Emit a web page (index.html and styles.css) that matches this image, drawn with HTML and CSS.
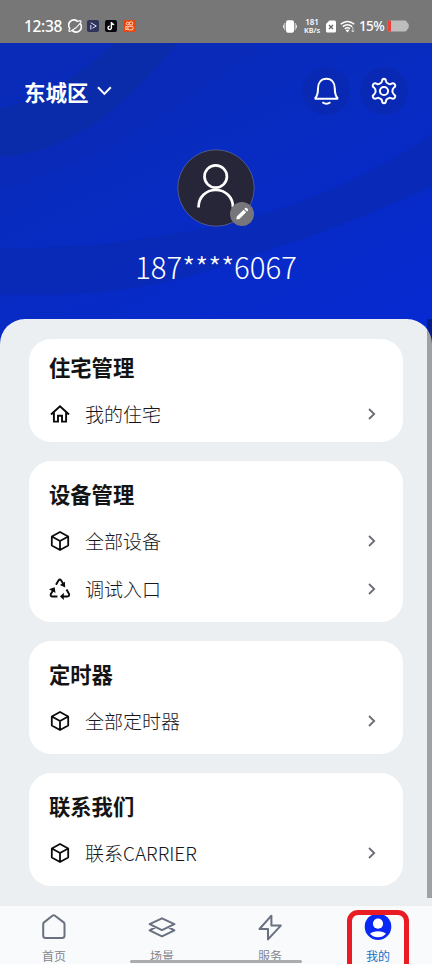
FILE: index.html
```html
<!DOCTYPE html>
<html lang="zh-CN">
<head>
<meta charset="utf-8">
<title>我的</title>
<link rel="stylesheet" href="styles.css">
</head>
<body>
<svg class="defs" width="0" height="0">
  <symbol id="cube" viewBox="0 0 20 20"><path d="M10 1 18.2 5.5V14.5L10 19 1.8 14.5V5.5ZM1.8 5.5 10 10 18.2 5.5M10 10V19" fill="none" stroke="#0b0b0d" stroke-width="1.8" stroke-linejoin="round"/></symbol>
  <symbol id="next" viewBox="0 0 10 14"><path d="M2 2 7.2 7 2 12" fill="none" stroke="#6b6c74" stroke-width="1.8"/></symbol>
</svg>
<div class="screen">
  <div class="status">
    <div class="status-left">
      <span class="clock">12:38</span>
      <svg class="planet" width="14" height="14" viewBox="0 0 14 14"><path d="M2 9.8A5 5 0 0 1 9.8 2.6M12 4.2A5 5 0 0 1 4.2 11.4" fill="none" stroke="#fff" stroke-width="1.6"/><path d="M9.8 2.6C13 .6 14 2 12 4.5 9.8 7.7 6 10.5 3 12 .6 13 .2 11.8 2 9.4" fill="none" stroke="#fff" stroke-width="1.1"/></svg>
      <svg width="12" height="12" viewBox="0 0 12 12"><rect width="12" height="12" rx="2" fill="#30345b"/><path d="M3.8 2.8 9.3 6 5.5 8.2M3.8 5V9.5" fill="none" stroke="#e0e3ff" stroke-width="1"/></svg>
      <svg width="12" height="12" viewBox="0 0 12 12"><rect width="12" height="12" rx="2" fill="#07070d"/><path d="M6.4 2V7.8A1.7 1.7 0 1 1 4.8 6.1M6.4 2.2C6.7 3.8 7.7 4.5 9.2 4.6" fill="none" stroke="#fff" stroke-width="1.4"/></svg>
      <svg width="13" height="12" viewBox="0 0 13 12"><rect width="13" height="12" rx="2" fill="#e8480e"/><g fill="none" stroke="#ffe8dc" stroke-width=".9"><circle cx="4.7" cy="3.6" r="1.4"/><circle cx="8.1" cy="3.4" r="1.7"/><rect x="5" y="6.3" width="5" height="3.6" rx="1"/><path d="M5 7.3 2.8 6.4V9.8L5 8.8"/></g></svg>
    </div>
    <div class="status-right">
      <svg class="vibrate" width="14" height="13" viewBox="0 0 14 13"><rect x="3" y=".2" width="8" height="12.6" rx="2" fill="#fff"/><path d="M1.8 3V10M12.2 3V10M.5 4.8V8.2M13.5 4.8V8.2" stroke="#ddd" stroke-width="1"/></svg>
      <span class="speed"><span>181</span><span>KB/s</span></span>
      <svg class="sim" width="10" height="13" viewBox="0 0 10 13"><path d="M3.4.5H8.5A1.5 1.5 0 0 1 10 2V11A1.5 1.5 0 0 1 8.5 12.5H1.5A1.5 1.5 0 0 1 0 11V4Z" fill="#fff"/><path d="M3 5 7 9M7 5 3 9" stroke="#666" stroke-width="1.3"/></svg>
      <svg class="wifi" width="16" height="13" viewBox="0 0 16 13"><path d="M.8 4.2Q7.5-1.3 14.2 4.2M2.8 6.6Q7.5 2.8 12.2 6.6M4.8 8.8Q7.5 6.8 10 8.8" fill="none" stroke="#fff" stroke-width="1.5"/><path d="M5.6 10.2Q7.5 9 9.3 10.2L7.5 12.4Z" fill="#fff"/><path d="M12.8 7V12M11.3 10.5 12.8 12 14.3 10.5" fill="none" stroke="#ddd" stroke-width=".9"/></svg>
      <span class="pct">15%</span>
      <svg class="battery" width="22" height="12" viewBox="0 0 22 12"><path d="M2.5.5H18Q19.8.5 20.2 2.5L21.7 4V8L20.2 9.5Q19.8 11.5 18 11.5H2.5Q.3 11.5.3 9.5V2.5Q.3.5 2.5.5Z" fill="#bdbdbd"/><path d="M4 .5H2.5Q.3.5.3 2.5V9.5Q.3 11.5 2.5 11.5H4Z" fill="#ee4037"/></svg>
    </div>
  </div>

  <header class="hero">
    <svg class="waves" width="432" height="303" viewBox="0 43 432 303">
      <path d="M0 190Q60 174 118 142 195 97 265 43H178Q150 67 125 85 80 120 0 157Z" fill="#0b2ab8" opacity=".5"/>
      <path d="M0 109Q66 91 114 43H178Q143 86 103 118 50 155 0 157Z" fill="#0b2ca9" opacity=".9"/>
      <path d="M0 248Q90 249 170 234 310 215 432 134V187Q330 232 250 256 150 295 50 295H0Z" fill="#0929b5" opacity=".85"/>
    </svg>
    <div class="topline">
      <div class="place"><span>东城区</span><svg width="15" height="10" viewBox="0 0 15 10"><path d="M1 1.2 7.4 7.9 13.8 1.2" fill="none" stroke="#fff" stroke-width="2"/></svg></div>
      <div class="actions">
        <span class="round"><svg width="48" height="48" viewBox="0 0 48 48"><path d="M13.4 31C15.5 28.5 16 26 16 21.5 16 16 19 11.8 24.4 11.8S32.8 16 32.8 21.5C32.8 26 33.3 28.5 35.4 31V31.8H13.4ZM20.4 35.3Q24.4 38.2 28.4 35.3" fill="none" stroke="#fff" stroke-width="2" stroke-linejoin="round"/></svg></span>
        <span class="round"><svg width="48" height="48" viewBox="0 0 48 48"><path d="M21 15.8Q21.8 15.5 22 14.2 22.3 11.8 24 11.8T26 14.2Q26.2 15.5 27 15.8L29 17Q29.7 17.5 31 16.8 33.8 15.5 34.9 17.5T33.8 20.7Q32.4 21.8 32.4 24T33.8 27.3Q36 28.5 34.9 30.5T31 31.2Q29.7 30.5 29 31L27 32.2Q26.2 32.5 26 33.8 25.7 36.2 24 36.2T22 33.8Q21.8 32.5 21 32.2L19 31Q18.3 30.5 17 31.2 14.2 32.5 13.1 30.5T14.2 27.3Q15.6 26.2 15.6 24T14.2 20.7Q12 19.5 13.1 17.5T17 16.8Q18.3 17.5 19 17Z" fill="none" stroke="#fff" stroke-width="2"/><circle cx="24" cy="24" r="4.1" fill="none" stroke="#fff" stroke-width="2"/></svg></span>
      </div>
    </div>
    <div class="avatar">
      <svg width="78" height="78" viewBox="0 0 78 78"><circle cx="39" cy="39" r="38.2" fill="#272638" stroke="#77799a" stroke-width=".6"/><circle cx="38.7" cy="27.5" r="11.2" fill="none" stroke="#fff" stroke-width="2.7"/><path d="M21.5 58.5C21.5 48 29 41 38.7 41S56 48 56 58.5" fill="none" stroke="#fff" stroke-width="2.7"/></svg>
      <span class="edit"><svg width="24" height="24" viewBox="0 0 24 24"><path d="M6.3 17.5 6.8 14.5 13.6 7.7 16.2 10.3 9.4 17.1ZM14.4 6.9 15.5 5.8Q16.2 5.4 16.8 6L18 7.2Q18.4 7.8 18 8.4L17 9.5Z" fill="#fff"/></svg></span>
    </div>
    <div class="phone">187****6067</div>
  </header>

  <main class="sheet">
    <section class="card first">
      <h2>住宅管理</h2>
      <div class="row"><svg class="lead" width="20" height="20" viewBox="0 0 20 20"><path d="M1 10.5 10 2.2 19 10.5M3.9 8V17.6H8V11.7H12V17.6H16.1V8" fill="none" stroke="#0b0b0d" stroke-width="1.9"/></svg><span>我的住宅</span><svg class="go" width="10" height="14"><use href="#next"/></svg></div>
    </section>
    <section class="card">
      <h2>设备管理</h2>
      <div class="row"><svg class="lead" width="20" height="20"><use href="#cube"/></svg><span>全部设备</span><svg class="go" width="10" height="14"><use href="#next"/></svg></div>
      <div class="row"><svg class="lead" width="22" height="22" viewBox="0 0 22 22"><path d="M7 6.8 9.6 2.3Q10.8.8 12.1 2.3L14.3 6M17.5 11.5 20.1 16Q20.6 18.4 18.4 18.5H13.5M8.4 18.5H3Q1 18.2 1.9 16L4.3 12" fill="none" stroke="#0b0b0d" stroke-width="1.9"/><path d="M15.9 3.7 16.2 9.4 10.9 7.1ZM0 11.2 5.7 9.3 6.5 15ZM14.8 14.8V22L11 18.5Z" fill="#0b0b0d"/></svg><span>调试入口</span><svg class="go" width="10" height="14"><use href="#next"/></svg></div>
    </section>
    <section class="card">
      <h2>定时器</h2>
      <div class="row"><svg class="lead" width="20" height="20"><use href="#cube"/></svg><span>全部定时器</span><svg class="go" width="10" height="14"><use href="#next"/></svg></div>
    </section>
    <section class="card">
      <h2>联系我们</h2>
      <div class="row"><svg class="lead" width="20" height="20"><use href="#cube"/></svg><span>联系CARRIER</span><svg class="go" width="10" height="14"><use href="#next"/></svg></div>
    </section>
  </main>
  <div class="scrollbar"></div>

  <nav class="tabs">
    <div class="tab"><svg width="30" height="30" viewBox="0 0 30 30"><path d="M4.2 11.2Q4.2 10 5 9.4L13.4 2.8Q14.7 1.9 16 2.8L24.7 9.4Q25.5 10 25.5 11.2V22.5Q25.5 25 23 25H6.7Q4.2 25 4.2 22.5Z" fill="none" stroke="#697080" stroke-width="2"/></svg><span>首页</span></div>
    <div class="tab"><svg width="30" height="30" viewBox="0 0 30 30"><path d="M2.6 11.2 15 5.3 27.4 11.2 15 17.1ZM8 14.5 2.6 17.4 15 23.4 27.4 17.4 22 14.5" fill="none" stroke="#697080" stroke-width="2" stroke-linejoin="round"/></svg><span>场景</span></div>
    <div class="tab"><svg width="30" height="30" viewBox="0 0 30 30"><path d="M16.4 2.7 4.5 16H13V26.4L25.8 12.6H16.4Z" fill="none" stroke="#697080" stroke-width="2" stroke-linejoin="round"/></svg><span>服务</span></div>
    <div class="tab active"><svg width="30" height="30" viewBox="0 0 30 30"><circle cx="15" cy="13.7" r="13.3" fill="#0928f5"/><circle cx="15" cy="10.7" r="5.1" fill="#fff"/><path d="M7 20.7Q9.5 18.2 15 18.2T23 20.7Q19.8 24.3 15 24.3T7 20.7Z" fill="#fff"/></svg><span>我的</span></div>
  </nav>
  <div class="home-bar"></div>
  <div class="marker"></div>
</div>
</body>
</html>
```

FILE: styles.css
```css
* { box-sizing: border-box; }

body {
  margin: 0;
  font-family: "Noto Sans CJK SC", sans-serif;
  color: #16161c;
}

svg { display: block; flex: none; }
.defs { position: absolute; }

.screen {
  position: relative;
  width: 432px;
  height: 964px;
  overflow: hidden;
  display: flex;
  flex-direction: column;
  background: #ebeff2;
}

.status {
  height: 43px;
  flex: none;
  display: flex;
  justify-content: space-between;
  padding: 14px 23px 5px 24px;
  background: #777;
  color: #fff;
}

.status-left, .status-right { display: flex; align-items: center; height: 24px; }
.status-left { gap: 6px; }
.clock { font: 500 15.5px/24px "Noto Sans", sans-serif; width: 38px; letter-spacing: -0.35px; white-space: nowrap; }
.planet { margin-right: -1px; }
.speed { display: flex; flex-direction: column; width: 18px; margin: 0 5px 0 6px; font: 600 8px/8px "Noto Sans", sans-serif; text-align: center; white-space: nowrap; align-items: center; }
.speed span:last-child { font-size: 7.3px; }
.wifi { margin-left: 4px; }
.pct { font: 500 13.5px/24px "Noto Sans", sans-serif; letter-spacing: -0.6px; width: 26px; margin: 0 2px 0 3px; white-space: nowrap; }

.hero {
  position: relative;
  height: 303px;
  flex: none;
  display: flex;
  flex-direction: column;
  align-items: center;
  background: linear-gradient(155deg, #0a2bb6 0%, #082bc0 40%, #062ad3 100%);
  color: #fff;
}

.waves { position: absolute; inset: 0; }

.topline {
  position: relative;
  width: 100%;
  display: flex;
  justify-content: space-between;
  align-items: center;
  padding: 24px 24px 0;
}

.place { display: flex; align-items: center; gap: 8px; font-size: 21.5px; font-weight: 700; line-height: 30px; }
.place span { position: relative; top: 1px; }
.actions { display: flex; gap: 10px; }
.round { width: 48px; height: 48px; border-radius: 50%; background: #0929b5; }

.avatar { position: relative; width: 78px; height: 78px; margin-top: 34px; }
.edit { position: absolute; left: 53px; top: 53px; width: 24px; height: 24px; border-radius: 50%; background: #76767b; }

.phone { position: relative; margin-top: 17px; font-size: 29.3px; line-height: 44px; font-weight: 300; }

.sheet {
  position: relative;
  height: 587px;
  flex: none;
  margin-top: -27px;
  padding: 20px 29px 0;
  display: flex;
  flex-direction: column;
  gap: 19px;
  border-radius: 25px 25px 0 0;
  background: #ebeff2;
}

.card { padding: 20px 26px 9px 20px; border-radius: 22px; background: #fff; }
.card.first { padding-top: 15px; padding-bottom: 4px; }
.card h2 { margin: 0 0 10px; font-size: 21.3px; font-weight: 700; line-height: 26px; color: #141414; }
.row { height: 48px; display: flex; align-items: center; font-size: 19px; font-weight: 300; line-height: 28px; }
.row .lead { width: 22px; margin-right: 14px; }
.row .go { margin-left: auto; }

.scrollbar { position: absolute; left: 427px; top: 319px; width: 5px; height: 579px; background: rgba(0, 0, 0, 0.32); }

.tabs { height: 58px; flex: none; display: flex; background: #f8fafc; }
.tab { flex: 1; display: flex; flex-direction: column; align-items: center; padding-top: 7px; font-size: 12px; line-height: 18px; color: #85878d; }
.tab span { margin-top: 4px; }
.tab.active { color: #1670c4; }

.home-bar { position: absolute; left: 130px; top: 960px; width: 172px; height: 3px; border-radius: 2px; background: #aaacad; }
.marker { position: absolute; left: 347px; top: 910px; width: 62px; height: 70px; border: 5px solid #e91c24; border-radius: 11px; }
```
